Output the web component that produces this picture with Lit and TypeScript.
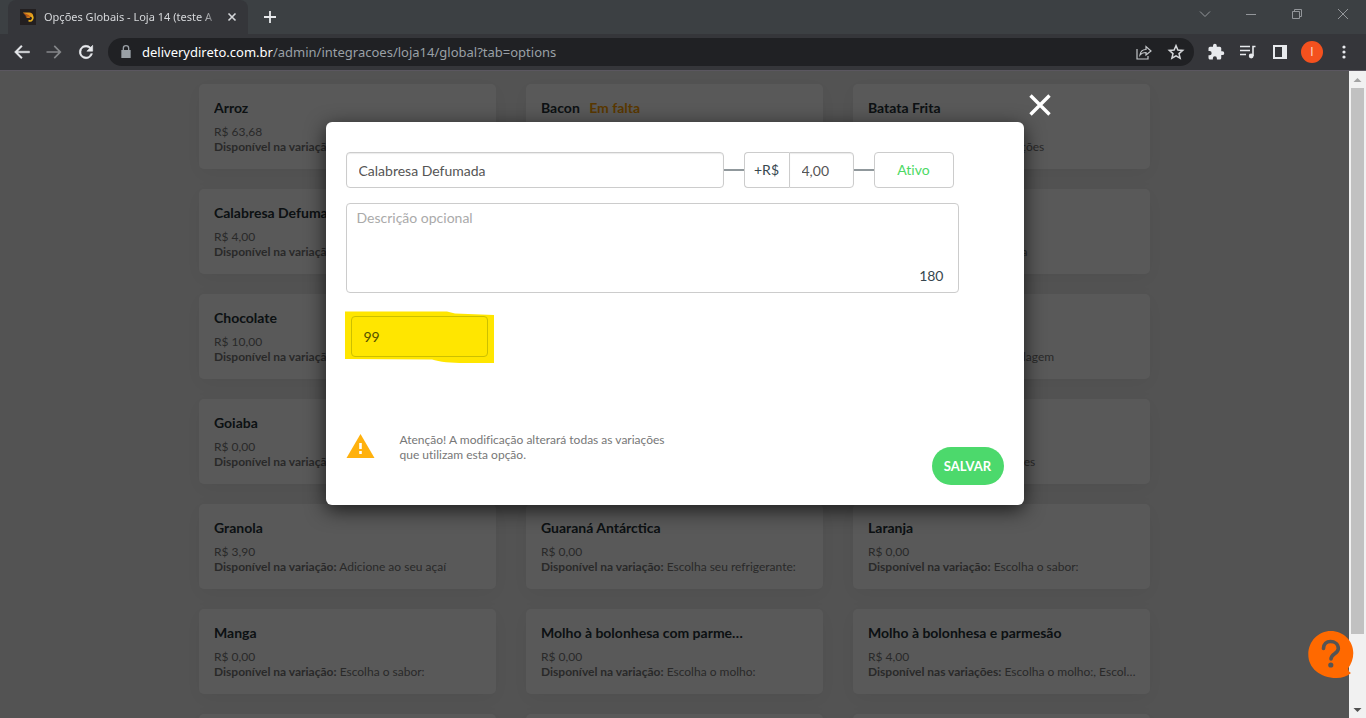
import { LitElement, html, css, svg, nothing } from "lit";
import { customElement, property, state } from "lit/decorators.js";

interface Option {
  name: string;
  price: string;
  label?: string;
  where: string;
  missing?: boolean;
}

const ONE = "Disponível na variação:";
const MANY = "Disponível nas variações:";

const BLANK: Option = { name: "", price: "", where: "" };

const OPTIONS: Option[] = [
  { name: "Arroz", price: "63,68", where: "" },
  { name: "Bacon", price: "", where: "", missing: true },
  { name: "Batata Frita", price: "", where: "Refeições" },
  { name: "Calabresa Defumada", price: "4,00", where: "" },
  BLANK,
  { name: "", price: "", where: "Salada" },
  { name: "Chocolate", price: "10,00", where: "" },
  BLANK,
  { name: "", price: "", where: "Embalagem" },
  { name: "Goiaba", price: "0,00", where: "" },
  BLANK,
  { name: "", price: "", where: "Sabores" },
  { name: "Granola", price: "3,90", where: "Adicione ao seu açaí" },
  { name: "Guaraná Antárctica", price: "0,00", where: "Escolha seu refrigerante:" },
  { name: "Laranja", price: "0,00", where: "Escolha o sabor:" },
  { name: "Manga", price: "0,00", where: "Escolha o sabor:" },
  { name: "Molho à bolonhesa com parmesão", price: "0,00", where: "Escolha o molho:" },
  { name: "Molho à bolonhesa e parmesão", price: "4,00", label: MANY, where: "Escolha o molho:, Escolha o segundo molho:" },
  BLANK,
  BLANK,
  BLANK,
];

const icon = (size: number, body: unknown, box = 24) =>
  html`<svg width=${size} height=${size} viewBox="0 0 ${box} ${box}" aria-hidden="true">${body}</svg>`;

@customElement("browser-bar")
class BrowserBar extends LitElement {
  static styles = css`
    :host { display: block; font-family: "Noto Sans", "Open Sans", sans-serif; color: #e8eaed; }
    svg { display: block; fill: currentColor; }
    button { border: 0; padding: 0; background: none; color: inherit; display: grid; place-items: center; font: inherit; }
    .tabs { display: flex; height: 34px; background: #3c4043; padding-left: 8px; }
    .tab { display: flex; align-items: center; width: 240px; box-sizing: border-box; padding: 0 8px 0 12px; background: #35363a; border-radius: 8px 8px 0 0; color: #d5d7da; }
    .title { flex: 1; min-width: 0; margin: 0 0 0 8px; font-size: 11px; line-height: 18px; white-space: nowrap; overflow: hidden; mask-image: linear-gradient(to right, #000 90%, transparent); }
    .tab-close { width: 16px; margin-left: 4px; }
    .new { width: 28px; margin-left: 8px; }
    .window { margin-left: auto; display: flex; color: #93969a; }
    .window button { width: 46px; height: 28px; }
    .bar { display: flex; align-items: center; height: 36px; background: #35363a; border-bottom: 1px solid #5b5760; padding: 0 6px; }
    .nav { width: 32px; height: 32px; }
    .dim { color: #85878a; }
    .address { flex: 1; display: flex; align-items: center; height: 28px; margin: 0 6px; padding: 0 2px 0 10px; border-radius: 14px; background: #202124; color: #9aa0a6; }
    .url { flex: 1; margin-left: 8px; font-size: 13px; line-height: 20px; white-space: nowrap; overflow: hidden; }
    .url b { font-weight: 400; color: #fff; }
    .avatar { width: 22px; height: 22px; border-radius: 50%; background: #f4511e; color: #fbd5c8; font-family: Roboto, sans-serif; font-size: 12px; margin: 0 5px; }
  `;

  render() {
    return html`
      <div class="tabs">
        <div class="tab">
          ${icon(16, svg`<rect width="16" height="16" fill="#231f20"/><path d="M3 3.500h6c2.500 0 4.200 1.500 4.200 3.500L12 8.500 9.500 7.500 5.500 6z" fill="#e0961e"/><path d="M3 3.500L6 7l3.500 2 1-1.500-2-1.500z" fill="#b5521a"/><path d="M5.500 7.500c1 1.500 2.500 1.800 4 1.500l.5-1.500z" fill="#d07a1c"/><path d="M11.500 6.500c1.500 1 1.500 3 .5 4.500s-2.500 1-3.500.500" fill="none" stroke="#e8b01c" stroke-width="1.600"/>`, 16)}
          <p class="title">Opções Globais - Loja 14 (teste A</p>
          <button class="tab-close" aria-label="Fechar guia">${icon(16, svg`<path d="M4.500 4.500l7 7m0-7l-7 7" stroke="currentColor" stroke-width="1.600"/>`, 16)}</button>
        </div>
        <button class="new" aria-label="Nova guia">${icon(16, svg`<path d="M8 2v12M2 8h12" stroke="currentColor" stroke-width="1.800"/>`, 16)}</button>
        <div class="window">
          <button aria-label="Pesquisar guias">${icon(12, svg`<path d="M1 3.500l5 5 5-5" fill="none" stroke="currentColor"/>`, 12)}</button>
          <button aria-label="Minimizar">${icon(12, svg`<path d="M1 6.500h10" stroke="currentColor"/>`, 12)}</button>
          <button aria-label="Restaurar">${icon(12, svg`<path d="M1.500 3.500h7v7h-7zM3.500 3.500v-2h7v7h-2" fill="none" stroke="currentColor"/>`, 12)}</button>
          <button aria-label="Fechar">${icon(12, svg`<path d="M1 1l10 10M11 1L1 11" stroke="currentColor"/>`, 12)}</button>
        </div>
      </div>
      <div class="bar">
        <button class="nav" aria-label="Voltar">${icon(20, svg`<path d="M21 11H6.800l5.600-5.600L11 4l-8 8 8 8 1.400-1.400L6.800 13H21z" stroke="currentColor" stroke-width=".5"/>`)}</button>
        <button class="nav dim" aria-label="Avançar">${icon(20, svg`<path d="M3 11h14.200l-5.600-5.600L13 4l8 8-8 8-1.400-1.400 5.600-5.600H3z"/>`)}</button>
        <button class="nav" aria-label="Atualizar">${icon(20, svg`<path d="M17.650 6.350A8 8 0 1 0 19.730 14h-2.080A6 6 0 1 1 12 6c1.660 0 3.140.690 4.220 1.780L13 11h7V4z" stroke="currentColor" stroke-width=".7"/>`)}</button>
        <div class="address">
          ${icon(16, svg`<path d="M17 9V6.500A5 5 0 0 0 7 6.500V9H5v12h14V9zM9 6.500a3 3 0 0 1 6 0V9H9z"/>`)}
          <span class="url"><b>deliverydireto.com.br</b>/admin/integracoes/loja14/global?tab=options</span>
          <button class="nav" aria-label="Compartilhar">${icon(16, svg`<path d="M1 5v10h11v-3M4 11c.5-4 3-5.500 6-5.500V2.500L15 7l-5 4V8.500C7.500 8.500 5.500 9 4 11z" fill="none" stroke="#c4c7ca" stroke-width="1.200"/>`, 16)}</button>
          <button class="nav" aria-label="Favoritar">${icon(18, svg`<path d="M12 3.500l2.500 5.900 6.400.5-4.900 4.200 1.500 6.200-5.500-3.300-5.500 3.300L8 14.100 3.100 9.900l6.400-.5z" fill="none" stroke="#d5d7da" stroke-width="2"/>`)}</button>
        </div>
        <button class="nav" aria-label="Extensões">${icon(18, svg`<path d="M20.500 11H19V7a2 2 0 0 0-2-2h-4V3.500a2.500 2.500 0 0 0-5 0V5H4a2 2 0 0 0-2 2v3.800h1.500a2.700 2.700 0 0 1 0 5.400H2V20c0 1.100.9 2 2 2h3.800v-1.500a2.700 2.700 0 0 1 5.400 0V22H17a2 2 0 0 0 2-2v-4h1.500a2.500 2.500 0 0 0 0-5z"/>`)}</button>
        <button class="nav" aria-label="Mídia">${icon(16, svg`<path d="M0 2.500h10M0 6.500h10M0 10.500h6M15.500 2.500H13V12" fill="none" stroke="currentColor" stroke-width="1.600"/><circle cx="11.200" cy="12" r="2.400"/>`, 16)}</button>
        <button class="nav" aria-label="Painel lateral">${icon(14, svg`<path d="M0 0h14v14H0zM2 2v10h7V2z" fill-rule="evenodd"/>`, 14)}</button>
        <button class="avatar" aria-label="Perfil">I</button>
        <button class="nav" aria-label="Menu">${icon(16, svg`<circle cx="8" cy="3" r="1.600"/><circle cx="8" cy="8" r="1.600"/><circle cx="8" cy="13" r="1.600"/>`, 16)}</button>
      </div>
    `;
  }
}

@customElement("option-card")
class OptionCard extends LitElement {
  static styles = css`
    :host { display: block; min-width: 0; box-sizing: border-box; height: 85px; padding: 14px 15px; background: #fff; border-radius: 5px; box-shadow: 0 5px 20px rgba(0, 0, 0, 0.05); color: #777; font-size: 12px; line-height: 15px; }
    h2 { margin: 0 0 6px; min-height: 20px; font-size: 14px; line-height: 20px; font-weight: 700; color: #263238; }
    h2, p { white-space: nowrap; overflow: hidden; text-overflow: ellipsis; }
    h2 { max-width: 203px; }
    p { margin: 0 -1px 0 0; min-height: 15px; }
    .missing { margin-left: 6px; color: #ffa000; }
  `;

  @property({ attribute: false }) option!: Option;

  render() {
    const o = this.option;
    return html`
      <h2>${o.name}${o.missing ? html` <span class="missing">Em falta</span>` : nothing}</h2>
      <p>${o.price ? `R$ ${o.price}` : nothing}</p>
      <p>${o.price || o.where ? html`<b>${o.label ?? ONE}</b> ${o.where}` : nothing}</p>
    `;
  }
}

@customElement("option-dialog")
class OptionDialog extends LitElement {
  static styles = css`
    :host { position: relative; display: block; box-sizing: border-box; width: 698px; max-width: 100%; padding: 30px 20px 20px; background: #fff; border-radius: 6px; box-shadow: 0 5px 20px rgba(0, 0, 0, 0.7); color: #37474f; font-size: 14px; line-height: 20px; }
    * { box-sizing: border-box; }
    input, textarea, button { font: inherit; margin: 0; }
    input, textarea { color: #555; outline: 0; }
    input { height: 36px; padding: 0 12px; border: 1px solid #ccc; border-radius: 4px; background: #fff; box-shadow: inset 0 1px 1px rgba(0, 0, 0, 0.08); }
    .row { display: flex; align-items: center; margin-right: 50px; }
    .name { flex: 1; min-width: 0; }
    .line { width: 20px; height: 2px; background: #90989c; }
    .price { display: flex; width: 110px; }
    .price label { flex: none; width: 45px; height: 36px; padding-top: 7px; text-align: center; border: 1px solid #ccc; border-right: 0; border-radius: 4px 0 0 4px; }
    .price input { flex: 1; min-width: 0; border-radius: 0 4px 4px 0; }
    .status { width: 80px; height: 36px; padding: 0; border: 1px solid #ccc; border-radius: 4px; background: #fff; color: #4cd964; font-variant-ligatures: none; }
    .description { display: grid; margin: 15px 45px 0 0; }
    .description > * { grid-area: 1 / 1; }
    textarea { display: block; width: 100%; height: 90px; padding: 4px 10px; border: 1px solid #ccc; border-radius: 4px; resize: none; }
    textarea::placeholder { color: #aaa; }
    .count { align-self: end; justify-self: end; margin: 0 15px 7px 0; pointer-events: none; }
    .marked { display: grid; width: 150px; height: 52px; margin: 18px 0 0 -1px; }
    .marked > * { grid-area: 1 / 1; }
    .marked svg { display: block; fill: #ffe600; }
    .marked input { width: 137px; height: 41px; margin: 5px 0 0 6px; background: none; border-color: #ccc000; color: #555000; box-shadow: none; }
    .foot { display: flex; align-items: flex-start; margin-top: 69px; }
    .foot svg { display: block; flex: none; margin-top: 2px; }
    .notice { flex: 1; margin: 0 0 0 25px; color: #777; font-size: 12px; line-height: 15px; font-variant-ligatures: none; }
    .save { width: 72px; height: 38px; margin-top: 15px; padding: 0; border: 0; border-radius: 19px; background: #4cd96c; color: #fff; font-size: 13px; font-weight: 700; }
    .close { position: absolute; right: -28px; top: -29px; width: 24px; height: 24px; padding: 0; border: 0; background: none; }
    .close svg { display: block; }
  `;

  @state() private description = "";

  render() {
    return html`
      <form @submit=${(e: Event) => e.preventDefault()}>
        <div class="row">
          <input class="name" aria-label="Nome da opção" value="Calabresa Defumada" />
          <span class="line"></span>
          <div class="price">
            <label for="price">+R$</label>
            <input id="price" value="4,00" />
          </div>
          <span class="line"></span>
          <button class="status" type="button">Ativo</button>
        </div>
        <div class="description">
          <textarea aria-label="Descrição" maxlength="180" placeholder="Descrição opcional"
            @input=${(e: Event) => (this.description = (e.target as HTMLTextAreaElement).value)}></textarea>
          <span class="count">${180 - this.description.length}</span>
        </div>
        <div class="marked">
          <svg width="150" height="52" viewBox="0 0 150 52" aria-hidden="true"><path d="M0 .5h102l8 2 39 1.500v48h-30c-12 0-25-1-32-3.500L0 48z"/></svg>
          <input aria-label="Código" value="99" />
        </div>
        <div class="foot">
          <svg width="29" height="24" viewBox="0 0 29 24" aria-hidden="true"><path d="M14.500 0L28.500 24H.5z" fill="#ffb10d"/><path d="M13.200 9h2.600v6h-2.600zM13.200 17h2.600v3h-2.600z" fill="#fff"/></svg>
          <p class="notice">Atenção! A modificação alterará todas as variações<br />que utilizam esta opção.</p>
          <button class="save">SALVAR</button>
        </div>
      </form>
      <button class="close" aria-label="Fechar">
        <svg width="24" height="24" viewBox="0 0 24 24" aria-hidden="true"><path d="M2.500 2.500l19 19m0-19l-19 19" stroke="#fff" stroke-width="3.400"/></svg>
      </button>
    `;
  }
}

@customElement("app-root")
class AppRoot extends LitElement {
  static styles = css`
    :host { display: flex; flex-direction: column; height: 100vh; overflow: hidden; font-family: Lato, sans-serif; }
    .view { position: relative; flex: 1; min-height: 0; display: flex; }
    .page { position: relative; flex: 1; min-width: 0; overflow: hidden; background: #eee; }
    .grid { display: grid; grid-template-columns: repeat(3, minmax(0, 1fr)); gap: 20px 30px; max-width: 951px; margin: 0 auto; padding-top: 13px; }
    .overlay { position: absolute; inset: 0; display: flex; flex-direction: column; align-items: center; padding-top: 51px; background: rgba(0, 0, 0, 0.65); }
    .scroll { display: flex; flex-direction: column; width: 17px; background: #f1f1f1; }
    .scroll svg { display: block; flex: none; }
    .rail { flex: 1; padding: 0 2px; }
    .thumb { height: 89%; background: #c1c1c1; }
    .help { position: absolute; right: 12px; bottom: 39px; width: 46px; height: 48px; padding: 0; border: 0; background: none; }
    .help svg { display: block; }
  `;

  render() {
    return html`
      <browser-bar></browser-bar>
      <main class="view">
        <div class="page">
          <section class="grid">${OPTIONS.map((o) => html`<option-card .option=${o}></option-card>`)}</section>
          <div class="overlay"><option-dialog role="dialog" aria-label="Editar opção"></option-dialog></div>
        </div>
        <div class="scroll">
          <svg width="17" height="17" viewBox="0 0 17 17" aria-hidden="true"><path d="M8.500 7l4 4h-8z" fill="#a3a3a3"/></svg>
          <div class="rail"><div class="thumb"></div></div>
          <svg width="17" height="17" viewBox="0 0 17 17" aria-hidden="true"><path d="M8.500 11l4-4h-8z" fill="#505050"/></svg>
        </div>
        <button class="help" aria-label="Ajuda">
          <svg width="46" height="48" viewBox="0 0 46 48" aria-hidden="true"><path d="M22.800 0C35.500 0 45.300 10 45.300 22c0 6-2 11-5.300 15.500.3 2 1.200 3.500 3 4.500-4 3.500-9 5-14.500 5C12 47 .3 37 .3 23.500.3 10 10.500 0 22.800 0z" fill="#ff6900"/><path d="M15.500 17.500c0-4.500 3-7 7-7s7.800 2.500 7.800 7c0 5.500-7.300 5-7.300 10.500" fill="none" stroke="#545454" stroke-width="3.600" stroke-linecap="round"/><circle cx="22.800" cy="34" r="2.600" fill="#545454"/></svg>
        </button>
      </main>
    `;
  }
}
